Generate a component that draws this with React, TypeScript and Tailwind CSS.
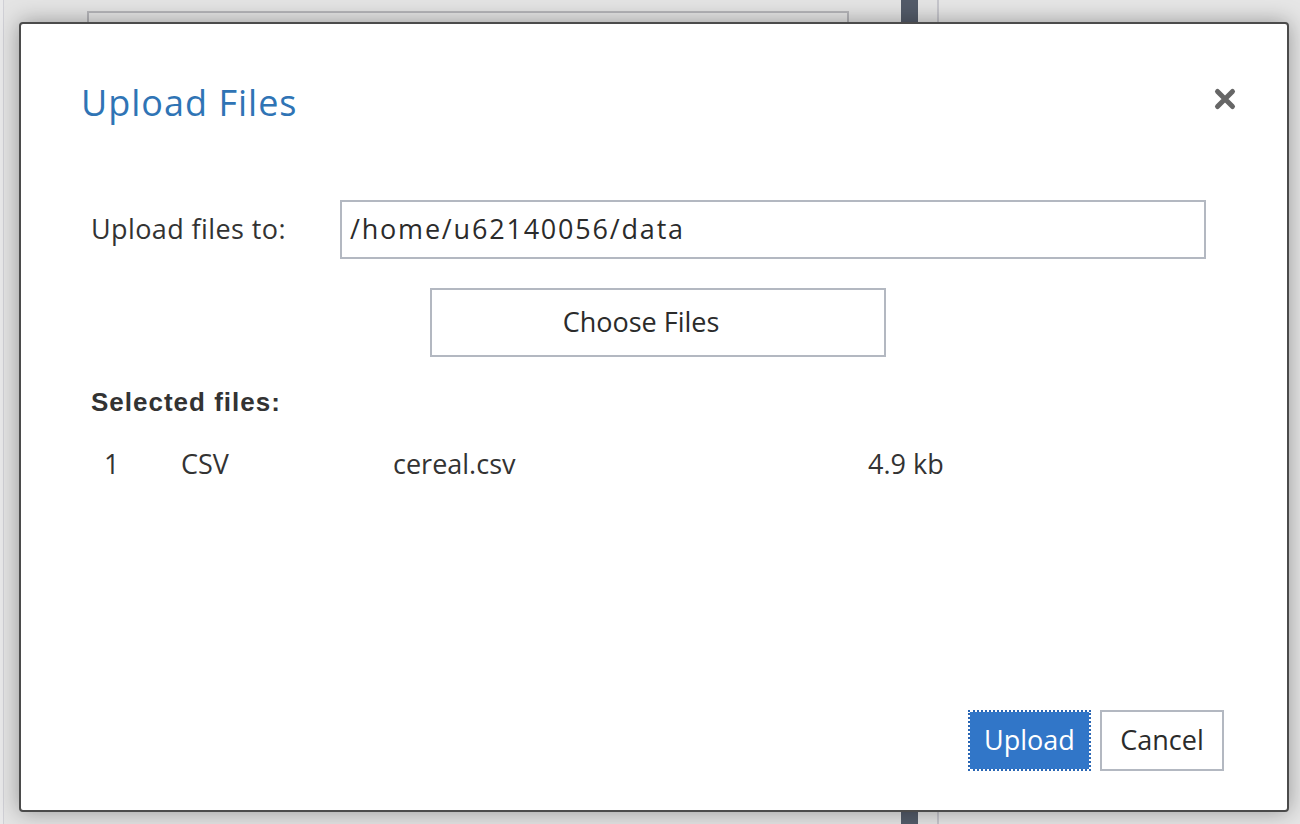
import React from 'react';

const font = { fontFamily: '"Open Sans", "Noto Sans", sans-serif' };

const CloseIcon: React.FC = () => (
  <svg width="24" height="24" viewBox="0 0 24 24" className="text-[#666]">
    <path d="M4.5 4.5 L19.5 19.5 M19.5 4.5 L4.5 19.5" stroke="currentColor" strokeWidth="5" strokeLinecap="round" />
  </svg>
);

export default function App() {
  return (
    <div className="relative w-[1300px] h-[824px] overflow-hidden bg-[#e4e4e4]" style={font}>
      {/* page behind the dialog */}
      <div className="flex h-full">
        <div className="w-[3px] bg-[#e9e9ea]"></div>
        <div className="w-[1px] bg-[#d0d0d6]"></div>
        <div className="w-[83px]"></div>
        <div className="w-[762px] pt-[11px]">
          <div className="h-[60px] border-2 border-[#b6b6ba] bg-[#e6e6e6]"></div>
        </div>
        <div className="w-[52px]"></div>
        <div className="w-[17px] bg-[#535b69]"></div>
        <div className="w-[19px]"></div>
        <div className="w-[2px] bg-[#c6c6cc]"></div>
        <div className="flex-1 bg-[#e6e6e6]"></div>
      </div>

      {/* Upload dialog */}
      <div className="absolute left-[19px] top-[22px] w-[1270px] h-[790px] bg-white border-2 border-[#4b4b4b] rounded-[4px] shadow-[0_0_22px_rgba(0,0,0,0.35)] flex flex-col">
        {/* Header */}
        <div className="h-[158px] flex items-center justify-between pl-[60px] pr-[50px]">
          <h1 className="text-[36px] leading-none tracking-[1px] text-[#2f74b5]">Upload Files</h1>
          <button className="w-6 h-6 mb-[8px] flex items-center justify-center">
            <CloseIcon />
          </button>
        </div>

        {/* Destination */}
        <div className="flex items-center mt-[18px] pl-[70px] pr-[81px]">
          <label className="w-[249px] text-[27px] tracking-[0.4px] text-[#333]">Upload files to:</label>
          <div className="flex-1 h-[59px] border-2 border-[#b3b8c1] flex items-center px-[8px] text-[27px] tracking-[1.8px] text-[#2b2b2b]">
            /home/u62140056/data
          </div>
        </div>

        <div className="mt-[29px] pl-[409px]">
          <button className="w-[456px] h-[69px] pr-[34px] border-2 border-[#b3b8c1] text-[27px] text-[#2b2b2b] bg-white">
            Choose Files
          </button>
        </div>

        {/* Selected files */}
        <div className="mt-[30px] pl-[70px] text-[26px] leading-[30px] tracking-[1px] font-bold text-[#333]" style={{ fontFamily: '"Liberation Sans", Arial, sans-serif' }}>
          Selected files:
        </div>
        <div className="mt-[31px] pl-[83px] flex text-[27px] leading-[32px] text-[#333]">
          <span className="w-[77px]">1</span>
          <span className="w-[212px]">CSV</span>
          <span className="w-[475px]">cereal.csv</span>
          <span>4.9 kb</span>
        </div>

        <div className="flex-1"></div>

        {/* Footer */}
        <div className="flex justify-end gap-[9px] pr-[63px] pb-[39px]">
          <button className="w-[123px] h-[61px] bg-[#3176c8] bg-clip-padding border-2 border-dotted border-[#2a66b4] text-white text-[27px]">
            Upload
          </button>
          <button className="w-[124px] h-[61px] bg-white border-2 border-[#b3b8c1] text-[#2b2b2b] text-[27px]">
            Cancel
          </button>
        </div>
      </div>
    </div>
  );
}
